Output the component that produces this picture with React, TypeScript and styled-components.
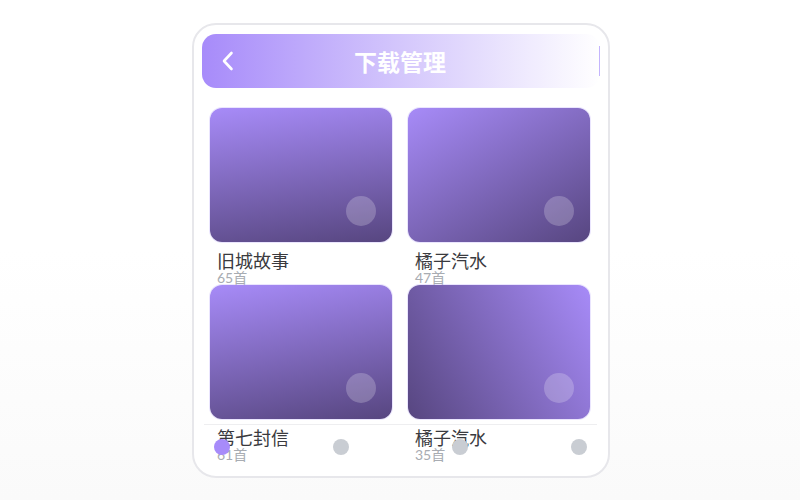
import React from "react";
import styled, { createGlobalStyle } from "styled-components";

const Global = createGlobalStyle`
  html, body { margin: 0; padding: 0; }
  body {
    background: linear-gradient(180deg, #ffffff 50%, #fafafa 100%);
    min-height: 500px;
    font-family: "Noto Sans CJK SC", "Noto Sans", sans-serif;
  }
`;

const Page = styled.div`
  display: flex;
  justify-content: center;
  padding: 23px 0 0 2px;
  height: 500px;
  box-sizing: border-box;
`;

const Phone = styled.div`
  position: relative;
  width: 418px;
  height: 455px;
  box-sizing: border-box;
  border: 2px solid #e7e7eb;
  border-radius: 24px;
  background: #fff;
  overflow: hidden;
  padding: 9px 8px 0;
`;

const Header = styled.div`
  height: 54px;
  border-radius: 14px;
  background: linear-gradient(90deg, #a78bfa 0%, #d4c7fc 50%, #ffffff 100%);
  display: grid;
  grid-template-columns: 60px 1fr 60px;
  align-items: center;
`;

const Back = styled.div`
  display: flex;
  align-items: center;
  padding-left: 19px;
`;

const Title = styled.h1`
  margin: 0;
  text-align: center;
  color: #fff;
  font-size: 23px;
  font-weight: 700;
  line-height: 1;
  transform: translateX(-1px);
`;

const EdgeLine = styled.span`
  justify-self: end;
  width: 1px;
  height: 30px;
  background: #c4b5fd;
`;

const Grid = styled.div`
  display: grid;
  grid-template-columns: 182px 182px;
  grid-auto-rows: 177px;
  column-gap: 16px;
  padding: 20px 8px 0;
`;

const Card = styled.div`
  display: flex;
  flex-direction: column;
  min-height: 0;
`;

const Cover = styled.div<{ $angle: number }>`
  position: relative;
  flex: 0 0 134px;
  border-radius: 12px;
  background: linear-gradient(${(p) => p.$angle}deg, #a78bf8 0%, #574680 100%);
  box-shadow: 0 0 0 1px rgba(196, 181, 253, 0.35);
`;

const PlayDot = styled.span`
  position: absolute;
  right: 16px;
  bottom: 16px;
  width: 30px;
  height: 30px;
  border-radius: 50%;
  background: rgba(255, 255, 255, 0.22);
`;

const Name = styled.div`
  margin-top: 8px;
  padding-left: 7px;
  font-size: 18px;
  line-height: 21px;
  color: #3a3a3e;
`;

const Count = styled.div`
  padding-left: 7px;
  font-family: "Lato", "Noto Sans CJK SC", sans-serif;
  font-size: 14px;
  line-height: 14px;
  color: #a8acb2;
`;

const Nav = styled.div`
  position: absolute;
  left: 10px;
  right: 11px;
  bottom: 7px;
  height: 44px;
  border-top: 1px solid #eeeef0;
  display: flex;
  justify-content: space-between;
  align-items: center;
  padding: 0 10px;
`;

const NavDot = styled.span<{ $active?: boolean }>`
  width: 16px;
  height: 16px;
  border-radius: 50%;
  background: ${(p) => (p.$active ? "#a78bfa" : "#c9cdd3")};
`;

const items = [
  { name: "旧城故事", count: "65首", angle: 172 },
  { name: "橘子汽水", count: "47首", angle: 150 },
  { name: "第七封信", count: "61首", angle: 170 },
  { name: "橘子汽水", count: "35首", angle: 240 },
];

export default function App() {
  return (
    <>
      <Global />
      <Page>
        <Phone>
          <Header>
            <Back>
              <svg width="14" height="20" viewBox="0 0 14 20" fill="none">
                <path
                  d="M10.5 2 L3 10 L10.5 18"
                  stroke="#fff"
                  strokeWidth="2.6"
                  strokeLinecap="round"
                  strokeLinejoin="round"
                />
              </svg>
            </Back>
            <Title>下载管理</Title>
            <EdgeLine />
          </Header>
          <Grid>
            {items.map((it, i) => (
              <Card key={i}>
                <Cover $angle={it.angle}>
                  <PlayDot />
                </Cover>
                <Name>{it.name}</Name>
                <Count>{it.count}</Count>
              </Card>
            ))}
          </Grid>
          <Nav>
            <NavDot $active />
            <NavDot />
            <NavDot />
            <NavDot />
          </Nav>
        </Phone>
      </Page>
    </>
  );
}
